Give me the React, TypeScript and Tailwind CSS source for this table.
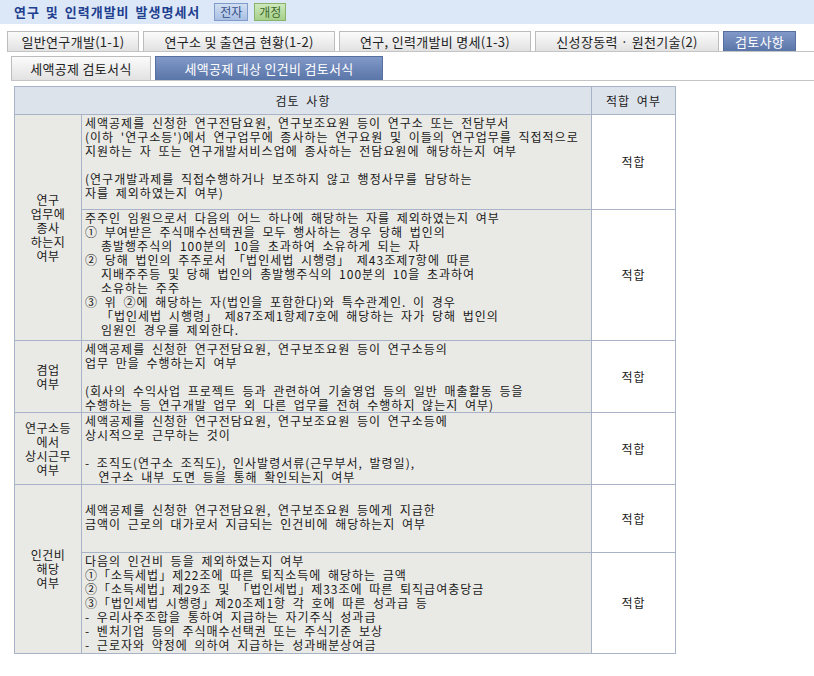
import React from "react";

const FONT = { fontFamily: '"Noto Sans CJK KR", "Noto Sans", sans-serif' };

function Lines({ lines }: { lines: { t: string; indent?: boolean }[] }) {
  return (
    <div className="leading-[14px] tracking-[1px] [word-spacing:3px]">
      {lines.map((l, i) => (
        <div key={i} className={`whitespace-pre h-[14px] ${l.indent ? "pl-[16px]" : ""}`}>
          {l.t === "" ? "\u00a0" : l.t}
        </div>
      ))}
    </div>
  );
}

const r1a = [
  { t: "세액공제를 신청한 연구전담요원, 연구보조요원 등이 연구소 또는 전담부서" },
  { t: "(이하 '연구소등')에서 연구업무에 종사하는 연구요원 및 이들의 연구업무를 직접적으로" },
  { t: "지원하는 자 또는 연구개발서비스업에 종사하는 전담요원에 해당하는지 여부" },
  { t: "" },
  { t: "(연구개발과제를 직접수행하거나 보조하지 않고 행정사무를 담당하는" },
  { t: "자를 제외하였는지 여부)" },
];
const r1b = [
  { t: "주주인 임원으로서 다음의 어느 하나에 해당하는 자를 제외하였는지 여부" },
  { t: "① 부여받은 주식매수선택권을 모두 행사하는 경우 당해 법인의" },
  { t: "총발행주식의 100분의 10을 초과하여 소유하게 되는 자", indent: true },
  { t: "② 당해 법인의 주주로서 「법인세법 시행령」 제43조제7항에 따른" },
  { t: "지배주주등 및 당해 법인의 총발행주식의 100분의 10을 초과하여", indent: true },
  { t: "소유하는 주주", indent: true },
  { t: "③ 위 ②에 해당하는 자(법인을 포함한다)와 특수관계인. 이 경우" },
  { t: "「법인세법 시행령」 제87조제1항제7호에 해당하는 자가 당해 법인의", indent: true },
  { t: "임원인 경우를 제외한다.", indent: true },
];
const r2 = [
  { t: "세액공제를 신청한 연구전담요원, 연구보조요원 등이 연구소등의" },
  { t: "업무 만을 수행하는지 여부" },
  { t: "" },
  { t: "(회사의 수익사업 프로젝트 등과 관련하여 기술영업 등의 일반 매출활동 등을" },
  { t: "수행하는 등 연구개발 업무 외 다른 업무를 전혀 수행하지 않는지 여부)" },
];
const r3 = [
  { t: "세액공제를 신청한 연구전담요원, 연구보조요원 등이 연구소등에" },
  { t: "상시적으로 근무하는 것이" },
  { t: "" },
  { t: "- 조직도(연구소 조직도), 인사발령서류(근무부서, 발령일)," },
  { t: "  연구소 내부 도면 등을 통해 확인되는지 여부" },
];
const r4a = [
  { t: "세액공제를 신청한 연구전담요원, 연구보조요원 등에게 지급한" },
  { t: "금액이 근로의 대가로서 지급되는 인건비에 해당하는지 여부" },
];
const r4b = [
  { t: "다음의 인건비 등을 제외하였는지 여부" },
  { t: "①「소득세법」제22조에 따른 퇴직소득에 해당하는 금액" },
  { t: "②「소득세법」제29조 및 「법인세법」제33조에 따른 퇴직급여충당금" },
  { t: "③「법인세법 시행령」제20조제1항 각 호에 따른 성과급 등" },
  { t: "- 우리사주조합을 통하여 지급하는 자기주식 성과급" },
  { t: "- 벤처기업 등의 주식매수선택권 또는 주식기준 보상" },
  { t: "- 근로자와 약정에 의하여 지급하는 성과배분상여금" },
];

const border = "border border-[#a9b3c8]";
const labelCell = `${border} bg-[#e9e9e5] text-center align-middle leading-[14px] text-[12px] tracking-[0.5px]`;
const textCell = `${border} bg-[#e9e9e5] align-top pl-[3px] pt-[1px] text-[12px]`;
const okCell = `${border} bg-white text-center align-middle text-[12px] tracking-[1px]`;

function Tab({ label, active, w, h }: { label: string; active?: boolean; w: string; h: string }) {
  return (
    <div
      className={`${w} ${h} flex items-center justify-center text-[13px] tracking-[0.3px] border border-b-0 ${
        active
          ? "bg-gradient-to-b from-[#8199c8] to-[#5a75a8] border-[#55709f] text-white"
          : "bg-gradient-to-b from-[#fbfbfb] to-[#e2e2e2] border-[#bcbcbc] text-[#222]"
      }`}
    >
      {label}
    </div>
  );
}

export default function App() {
  return (
    <div className="w-[814px] h-[676px] bg-white text-[#1a1a1a]" style={FONT}>
      <div className="h-[24px] bg-[#dce8f8] flex items-center pl-[14px]">
        <span className="text-[13px] font-bold text-[#1f3f8f] tracking-[1px] [word-spacing:2px]">연구 및 인력개발비 발생명세서</span>
        <span className="ml-[14px] w-[34px] h-[18px] flex items-center justify-center text-[12px] text-[#33518a] bg-gradient-to-b from-[#d2dff2] to-[#a9bfe2] border border-[#7f9cca]">
          전자
        </span>
        <span className="ml-[6px] w-[32px] h-[18px] flex items-center justify-center text-[12px] text-[#3d6a2a] bg-gradient-to-b from-[#cfe8bd] to-[#a6d089] border border-[#87b36b]">
          개정
        </span>
      </div>

      <div className="mt-[7px] ml-[7px] flex gap-[4px] items-end border-b border-[#c4c4c4]">
        <Tab label="일반연구개발(1-1)" w="w-[132px]" h="h-[20px]" />
        <Tab label="연구소 및 출연금 현황(1-2)" w="w-[192px]" h="h-[20px]" />
        <Tab label="연구, 인력개발비 명세(1-3)" w="w-[192px]" h="h-[20px]" />
        <Tab label="신성장동력 · 원천기술(2)" w="w-[184px]" h="h-[20px]" />
        <Tab label="검토사항" active w="w-[73px]" h="h-[20px]" />
      </div>

      <div className="mt-[4px] ml-[11px] flex gap-[4px] items-end border-b border-[#c4c4c4]">
        <Tab label="세액공제 검토서식" w="w-[140px]" h="h-[24px]" />
        <Tab label="세액공제 대상 인건비 검토서식" active w="w-[228px]" h="h-[24px]" />
      </div>

      <table className="mt-[5px] ml-[14px] border-collapse table-fixed w-[662px]">
        <colgroup>
          <col className="w-[67px]" />
          <col className="w-[510px]" />
          <col className="w-[84px]" />
        </colgroup>
        <tbody>
          <tr className="h-[28px]">
            <td colSpan={2} className={`${border} bg-[#dde3eb] text-center text-[12px] tracking-[1px] [word-spacing:3px]`}>
              검토 사항
            </td>
            <td className={`${border} bg-[#dde3eb] text-center text-[12px] tracking-[1px] [word-spacing:3px]`}>적합 여부</td>
          </tr>
          <tr className="h-[95px]">
            <td rowSpan={2} className={labelCell}>
              연구<br />업무에<br />종사<br />하는지<br />여부
            </td>
            <td className={textCell}>
              <Lines lines={r1a} />
            </td>
            <td className={okCell}>적합</td>
          </tr>
          <tr className="h-[131px]">
            <td className={textCell}>
              <Lines lines={r1b} />
            </td>
            <td className={okCell}>적합</td>
          </tr>
          <tr className="h-[72px]">
            <td className={labelCell}>
              겸업<br />여부
            </td>
            <td className={textCell}>
              <Lines lines={r2} />
            </td>
            <td className={okCell}>적합</td>
          </tr>
          <tr className="h-[70px]">
            <td className={labelCell}>
              연구소등<br />에서<br />상시근무<br />여부
            </td>
            <td className={textCell}>
              <Lines lines={r3} />
            </td>
            <td className={okCell}>적합</td>
          </tr>
          <tr className="h-[68px]">
            <td rowSpan={2} className={labelCell}>
              인건비<br />해당<br />여부
            </td>
            <td className={`${textCell} !pt-[18px]`}>
              <Lines lines={r4a} />
            </td>
            <td className={okCell}>적합</td>
          </tr>
          <tr className="h-[101px]">
            <td className={textCell}>
              <Lines lines={r4b} />
            </td>
            <td className={okCell}>적합</td>
          </tr>
        </tbody>
      </table>
    </div>
  );
}
